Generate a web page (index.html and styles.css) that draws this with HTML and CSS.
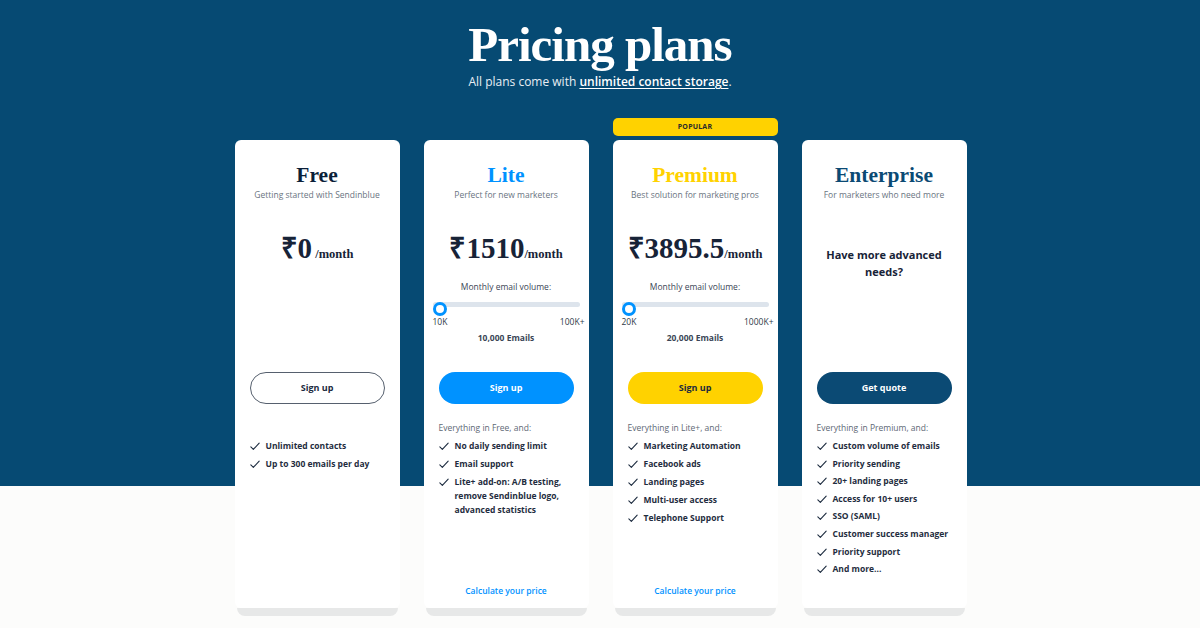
FILE: index.html
```html
<!DOCTYPE html>
<html lang="en">
<head>
<meta charset="utf-8">
<title>Pricing plans</title>
<link rel="stylesheet" href="styles.css">
</head>
<body>
<header class="hero">
  <h1 class="hero-title">Pricing plans</h1>
  <p class="hero-sub">All plans come with <a href="#" class="hero-link">unlimited contact storage</a>.</p>
</header>

<main class="plans">
  <!-- Free -->
  <div class="plan-col">
    <section class="card">
      <div class="card-top">
        <h2 class="plan-name name-free">Free</h2>
        <p class="plan-desc">Getting started with Sendinblue</p>
        <div class="price"><span class="amount">₹0</span><span class="per">&nbsp;/month</span></div>
      </div>
      <a href="#" class="btn btn-outline">Sign up</a>
      <div class="features">
        <ul class="list list-free">
          <li><svg class="check" viewBox="0 0 12 10"><path d="M1 5.5 L4 8.5 L11 1"/></svg>Unlimited contacts</li>
          <li><svg class="check" viewBox="0 0 12 10"><path d="M1 5.5 L4 8.5 L11 1"/></svg>Up to 300 emails per day</li>
        </ul>
      </div>
    </section>
    <div class="card-shadow"></div>
  </div>

  <!-- Lite -->
  <div class="plan-col">
    <section class="card">
      <div class="card-top">
        <h2 class="plan-name name-lite">Lite</h2>
        <p class="plan-desc">Perfect for new marketers</p>
        <div class="price"><span class="amount">₹1510</span><span class="per">/month</span></div>
        <p class="volume-label">Monthly email volume:</p>
        <div class="slider"><div class="track"></div><div class="thumb thumb-blue"></div></div>
        <div class="range"><span>10K</span><span>100K+</span></div>
        <p class="emails">10,000 Emails</p>
      </div>
      <a href="#" class="btn btn-blue">Sign up</a>
      <div class="features">
        <p class="everything">Everything in Free, and:</p>
        <ul class="list">
          <li><svg class="check" viewBox="0 0 12 10"><path d="M1 5.5 L4 8.5 L11 1"/></svg>No daily sending limit</li>
          <li><svg class="check" viewBox="0 0 12 10"><path d="M1 5.5 L4 8.5 L11 1"/></svg>Email support</li>
          <li><svg class="check" viewBox="0 0 12 10"><path d="M1 5.5 L4 8.5 L11 1"/></svg><span class="wrap">Lite+ add-on: A/B testing, remove Sendinblue logo, advanced statistics</span></li>
        </ul>
      </div>
      <a href="#" class="calc">Calculate your price</a>
    </section>
    <div class="card-shadow"></div>
  </div>

  <!-- Premium -->
  <div class="plan-col">
    <div class="badge">POPULAR</div>
    <section class="card">
      <div class="card-top">
        <h2 class="plan-name name-premium">Premium</h2>
        <p class="plan-desc">Best solution for marketing pros</p>
        <div class="price"><span class="amount">₹3895.5</span><span class="per">/month</span></div>
        <p class="volume-label">Monthly email volume:</p>
        <div class="slider"><div class="track"></div><div class="thumb thumb-blue"></div></div>
        <div class="range"><span>20K</span><span>1000K+</span></div>
        <p class="emails">20,000 Emails</p>
      </div>
      <a href="#" class="btn btn-yellow">Sign up</a>
      <div class="features">
        <p class="everything">Everything in Lite+, and:</p>
        <ul class="list">
          <li><svg class="check" viewBox="0 0 12 10"><path d="M1 5.5 L4 8.5 L11 1"/></svg>Marketing Automation</li>
          <li><svg class="check" viewBox="0 0 12 10"><path d="M1 5.5 L4 8.5 L11 1"/></svg>Facebook ads</li>
          <li><svg class="check" viewBox="0 0 12 10"><path d="M1 5.5 L4 8.5 L11 1"/></svg>Landing pages</li>
          <li><svg class="check" viewBox="0 0 12 10"><path d="M1 5.5 L4 8.5 L11 1"/></svg>Multi-user access</li>
          <li><svg class="check" viewBox="0 0 12 10"><path d="M1 5.5 L4 8.5 L11 1"/></svg>Telephone Support</li>
        </ul>
      </div>
      <a href="#" class="calc">Calculate your price</a>
    </section>
    <div class="card-shadow"></div>
  </div>

  <!-- Enterprise -->
  <div class="plan-col">
    <section class="card">
      <div class="card-top">
        <h2 class="plan-name name-enterprise">Enterprise</h2>
        <p class="plan-desc">For marketers who need more</p>
        <p class="advanced">Have more advanced needs?</p>
      </div>
      <a href="#" class="btn btn-navy">Get quote</a>
      <div class="features">
        <p class="everything">Everything in Premium, and:</p>
        <ul class="list list-tight">
          <li><svg class="check" viewBox="0 0 12 10"><path d="M1 5.5 L4 8.5 L11 1"/></svg>Custom volume of emails</li>
          <li><svg class="check" viewBox="0 0 12 10"><path d="M1 5.5 L4 8.5 L11 1"/></svg>Priority sending</li>
          <li><svg class="check" viewBox="0 0 12 10"><path d="M1 5.5 L4 8.5 L11 1"/></svg>20+ landing pages</li>
          <li><svg class="check" viewBox="0 0 12 10"><path d="M1 5.5 L4 8.5 L11 1"/></svg>Access for 10+ users</li>
          <li><svg class="check" viewBox="0 0 12 10"><path d="M1 5.5 L4 8.5 L11 1"/></svg>SSO (SAML)</li>
          <li><svg class="check" viewBox="0 0 12 10"><path d="M1 5.5 L4 8.5 L11 1"/></svg>Customer success manager</li>
          <li><svg class="check" viewBox="0 0 12 10"><path d="M1 5.5 L4 8.5 L11 1"/></svg>Priority support</li>
          <li><svg class="check" viewBox="0 0 12 10"><path d="M1 5.5 L4 8.5 L11 1"/></svg>And more...</li>
        </ul>
      </div>
    </section>
    <div class="card-shadow"></div>
  </div>
</main>
</body>
</html>
```

FILE: styles.css
```css
* { box-sizing: border-box; }

html, body { margin: 0; padding: 0; }

body {
  width: 1200px;
  height: 628px;
  overflow: hidden;
  font-family: "Open Sans", "Liberation Sans", sans-serif;
  color: #1b2a3e;
  background: linear-gradient(to bottom, #064a73 0, #064a73 486px, #fcfcfb 486px, #fcfcfb 100%);
}

.hero {
  text-align: center;
  padding-top: 17px;
}

.hero-title {
  margin: 0;
  font-family: "Liberation Serif", "Times New Roman", serif;
  font-weight: 700;
  font-size: 49px;
  line-height: 56px;
  letter-spacing: -1px;
  color: #ffffff;
}

.hero-sub {
  margin: -1px 0 0;
  font-size: 12px;
  line-height: 20px;
  color: #e8eef4;
}

.hero-link {
  color: #ffffff;
  font-weight: 600;
  text-decoration: underline;
  text-underline-offset: 2px;
}

.plans {
  display: flex;
  justify-content: center;
  align-items: flex-end;
  gap: 24px;
  margin-top: 26px;
  padding-left: 1px;
}

.plan-col {
  width: 165px;
  display: flex;
  flex-direction: column;
  align-items: center;
}

.badge {
  width: 165px;
  height: 18px;
  margin-bottom: 4px;
  border-radius: 5px;
  background: #ffd200;
  color: #2a2a2a;
  font-size: 7px;
  font-weight: 700;
  line-height: 18px;
  text-align: center;
  letter-spacing: 0.2px;
}

.card {
  width: 165px;
  height: 468px;
  background: #ffffff;
  border-radius: 6px;
  padding: 23px 15px 0;
  display: flex;
  flex-direction: column;
}

.card-shadow {
  width: 161px;
  height: 8px;
  background: #e7e8e8;
  border-radius: 0 0 8px 8px;
}

.card-top {
  height: 209px;
  margin: 0 -8px;
  text-align: center;
}

.plan-name {
  margin: 0;
  font-family: "Liberation Serif", "Times New Roman", serif;
  font-weight: 700;
  font-size: 21.5px;
  line-height: 25px;
}

.name-free { color: #0b1f3a; }
.name-lite { color: #0092ff; }
.name-premium { color: #ffd200; }
.name-enterprise { color: #0b4a74; }

.plan-desc {
  margin: 0;
  font-size: 8.5px;
  line-height: 13px;
  color: #6a7481;
  white-space: nowrap;
}

.price {
  margin-top: 29px;
  font-family: "Liberation Serif", "Times New Roman", serif;
  font-weight: 700;
  color: #172337;
  line-height: 36px;
  white-space: nowrap;
}

.amount {
  font-size: 29px;
}

.per {
  font-size: 12.5px;
}

.volume-label {
  margin: 8px 0 0;
  font-size: 8.5px;
  line-height: 13px;
  color: #3b4656;
}

.slider {
  position: relative;
  height: 14px;
  margin: 9px 2px 0 2px;
}

.track {
  margin: 5px 0 0 0;
  height: 5px;
  border-radius: 3px;
  background: #dde4ec;
}

.thumb {
  position: absolute;
  left: 0;
  top: 0;
  width: 14px;
  height: 14px;
  border-radius: 50%;
  background: #ffffff;
  border: 3px solid #0092ff;
}

.range {
  display: flex;
  justify-content: space-between;
  margin: 0 -3px 0 2px;
  font-size: 8.5px;
  line-height: 12px;
  color: #2f3a48;
}

.emails {
  margin: 4px 0 0;
  font-size: 8.5px;
  font-weight: 700;
  line-height: 12px;
  color: #3b4656;
}

.advanced {
  margin: 45px 8px 0;
  font-size: 11px;
  font-weight: 700;
  line-height: 17px;
  color: #172337;
}

.btn {
  display: block;
  height: 32px;
  border-radius: 16px;
  text-align: center;
  line-height: 32px;
  font-size: 9px;
  font-weight: 700;
  text-decoration: none;
}

.btn-outline {
  border: 1px solid #56606e;
  color: #1b2a3e;
  line-height: 30px;
  background: #ffffff;
}

.btn-blue { background: #0092ff; color: #ffffff; }
.btn-yellow { background: #ffd200; color: #1b2a3e; }
.btn-navy { background: #0b4a74; color: #ffffff; }

.features {
  flex: 1;
  padding-top: 17px;
}

.everything {
  margin: 0 0 4px;
  font-size: 8.5px;
  line-height: 14px;
  color: #5e6875;
}

.list {
  list-style: none;
  margin: 0;
  padding: 0;
}

.list-free {
  padding-top: 18px;
}

.list li {
  display: flex;
  align-items: flex-start;
  margin: 0 0 4px;
  font-size: 8.5px;
  font-weight: 700;
  line-height: 14px;
  color: #1f2d40;
  white-space: nowrap;
}

.list-tight li {
  margin-bottom: 3.6px;
}

.list li .wrap {
  white-space: normal;
}

.check {
  flex: none;
  width: 10px;
  height: 9px;
  margin: 3px 6px 0 0;
  fill: none;
  stroke: #1b2a3e;
  stroke-width: 1.3;
  stroke-linecap: round;
  stroke-linejoin: round;
}

.calc {
  display: block;
  margin-bottom: 10px;
  text-align: center;
  font-size: 8.5px;
  line-height: 14px;
  font-weight: 600;
  color: #0092ff;
  text-decoration: none;
}
```
